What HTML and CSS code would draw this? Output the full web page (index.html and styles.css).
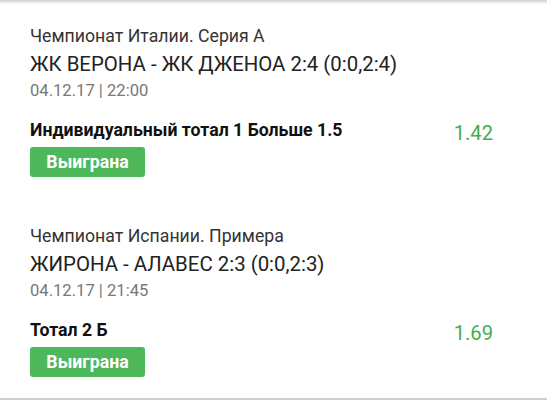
FILE: index.html
```html
<!DOCTYPE html>
<html lang="ru">
<head>
<meta charset="utf-8">
<link rel="stylesheet" href="styles.css">
</head>
<body>
<div class="shade"></div>
<div class="list">
  <div class="bet">
    <div class="league">Чемпионат Италии. Серия А</div>
    <div class="match">ЖК ВЕРОНА - ЖК ДЖЕНОА 2:4 (0:0,2:4)</div>
    <div class="date">04.12.17 | 22:00</div>
    <div class="row">
      <div class="name">Индивидуальный тотал 1 Больше 1.5</div>
      <div class="odds">1.42</div>
    </div>
    <div class="status">Выиграна</div>
  </div>
  <div class="bet">
    <div class="league">Чемпионат Испании. Примера</div>
    <div class="match">ЖИРОНА - АЛАВЕС 2:3 (0:0,2:3)</div>
    <div class="date">04.12.17 | 21:45</div>
    <div class="row">
      <div class="name">Тотал 2 Б</div>
      <div class="odds">1.69</div>
    </div>
    <div class="status">Выиграна</div>
  </div>
</div>
</body>
</html>
```
FILE: styles.css
```css
html, body {
  margin: 0;
  padding: 0;
  background: #ffffff;
}
body {
  font-family: Roboto, "Noto Sans", sans-serif;
  width: 547px;
  height: 400px;
  overflow: hidden;
}
.shade {
  height: 5px;
  background: linear-gradient(#cfcfcf, #f4f4f4 60%, #ffffff);
}
.list {
  height: 393px;
  border-bottom: 2px solid #cfcfcf;
}
.bet {
  height: 200px;
  box-sizing: border-box;
  padding: 21px 54px 0 30px;
}
.league {
  font-size: 17.7px;
  line-height: 20px;
  color: #333333;
}
.match {
  font-size: 20.4px;
  line-height: 26px;
  margin-top: 5px;
  color: #222222;
}
.date {
  font-size: 16.6px;
  line-height: 20px;
  margin-top: 4px;
  color: #777777;
}
.row {
  display: flex;
  justify-content: space-between;
  align-items: flex-start;
  margin-top: 19px;
}
.name {
  font-size: 17.7px;
  font-weight: 700;
  line-height: 20px;
  color: #111111;
}
.odds {
  font-size: 20.2px;
  line-height: 24px;
  color: #45ad4f;
  margin-top: 1px;
}
.status {
  display: inline-block;
  margin-top: 2px;
  height: 30px;
  line-height: 31px;
  width: 115px;
  text-align: center;
  background: #4cb85a;
  color: #ffffff;
  font-weight: 700;
  font-size: 17.7px;
  border-radius: 3px;
}
```
